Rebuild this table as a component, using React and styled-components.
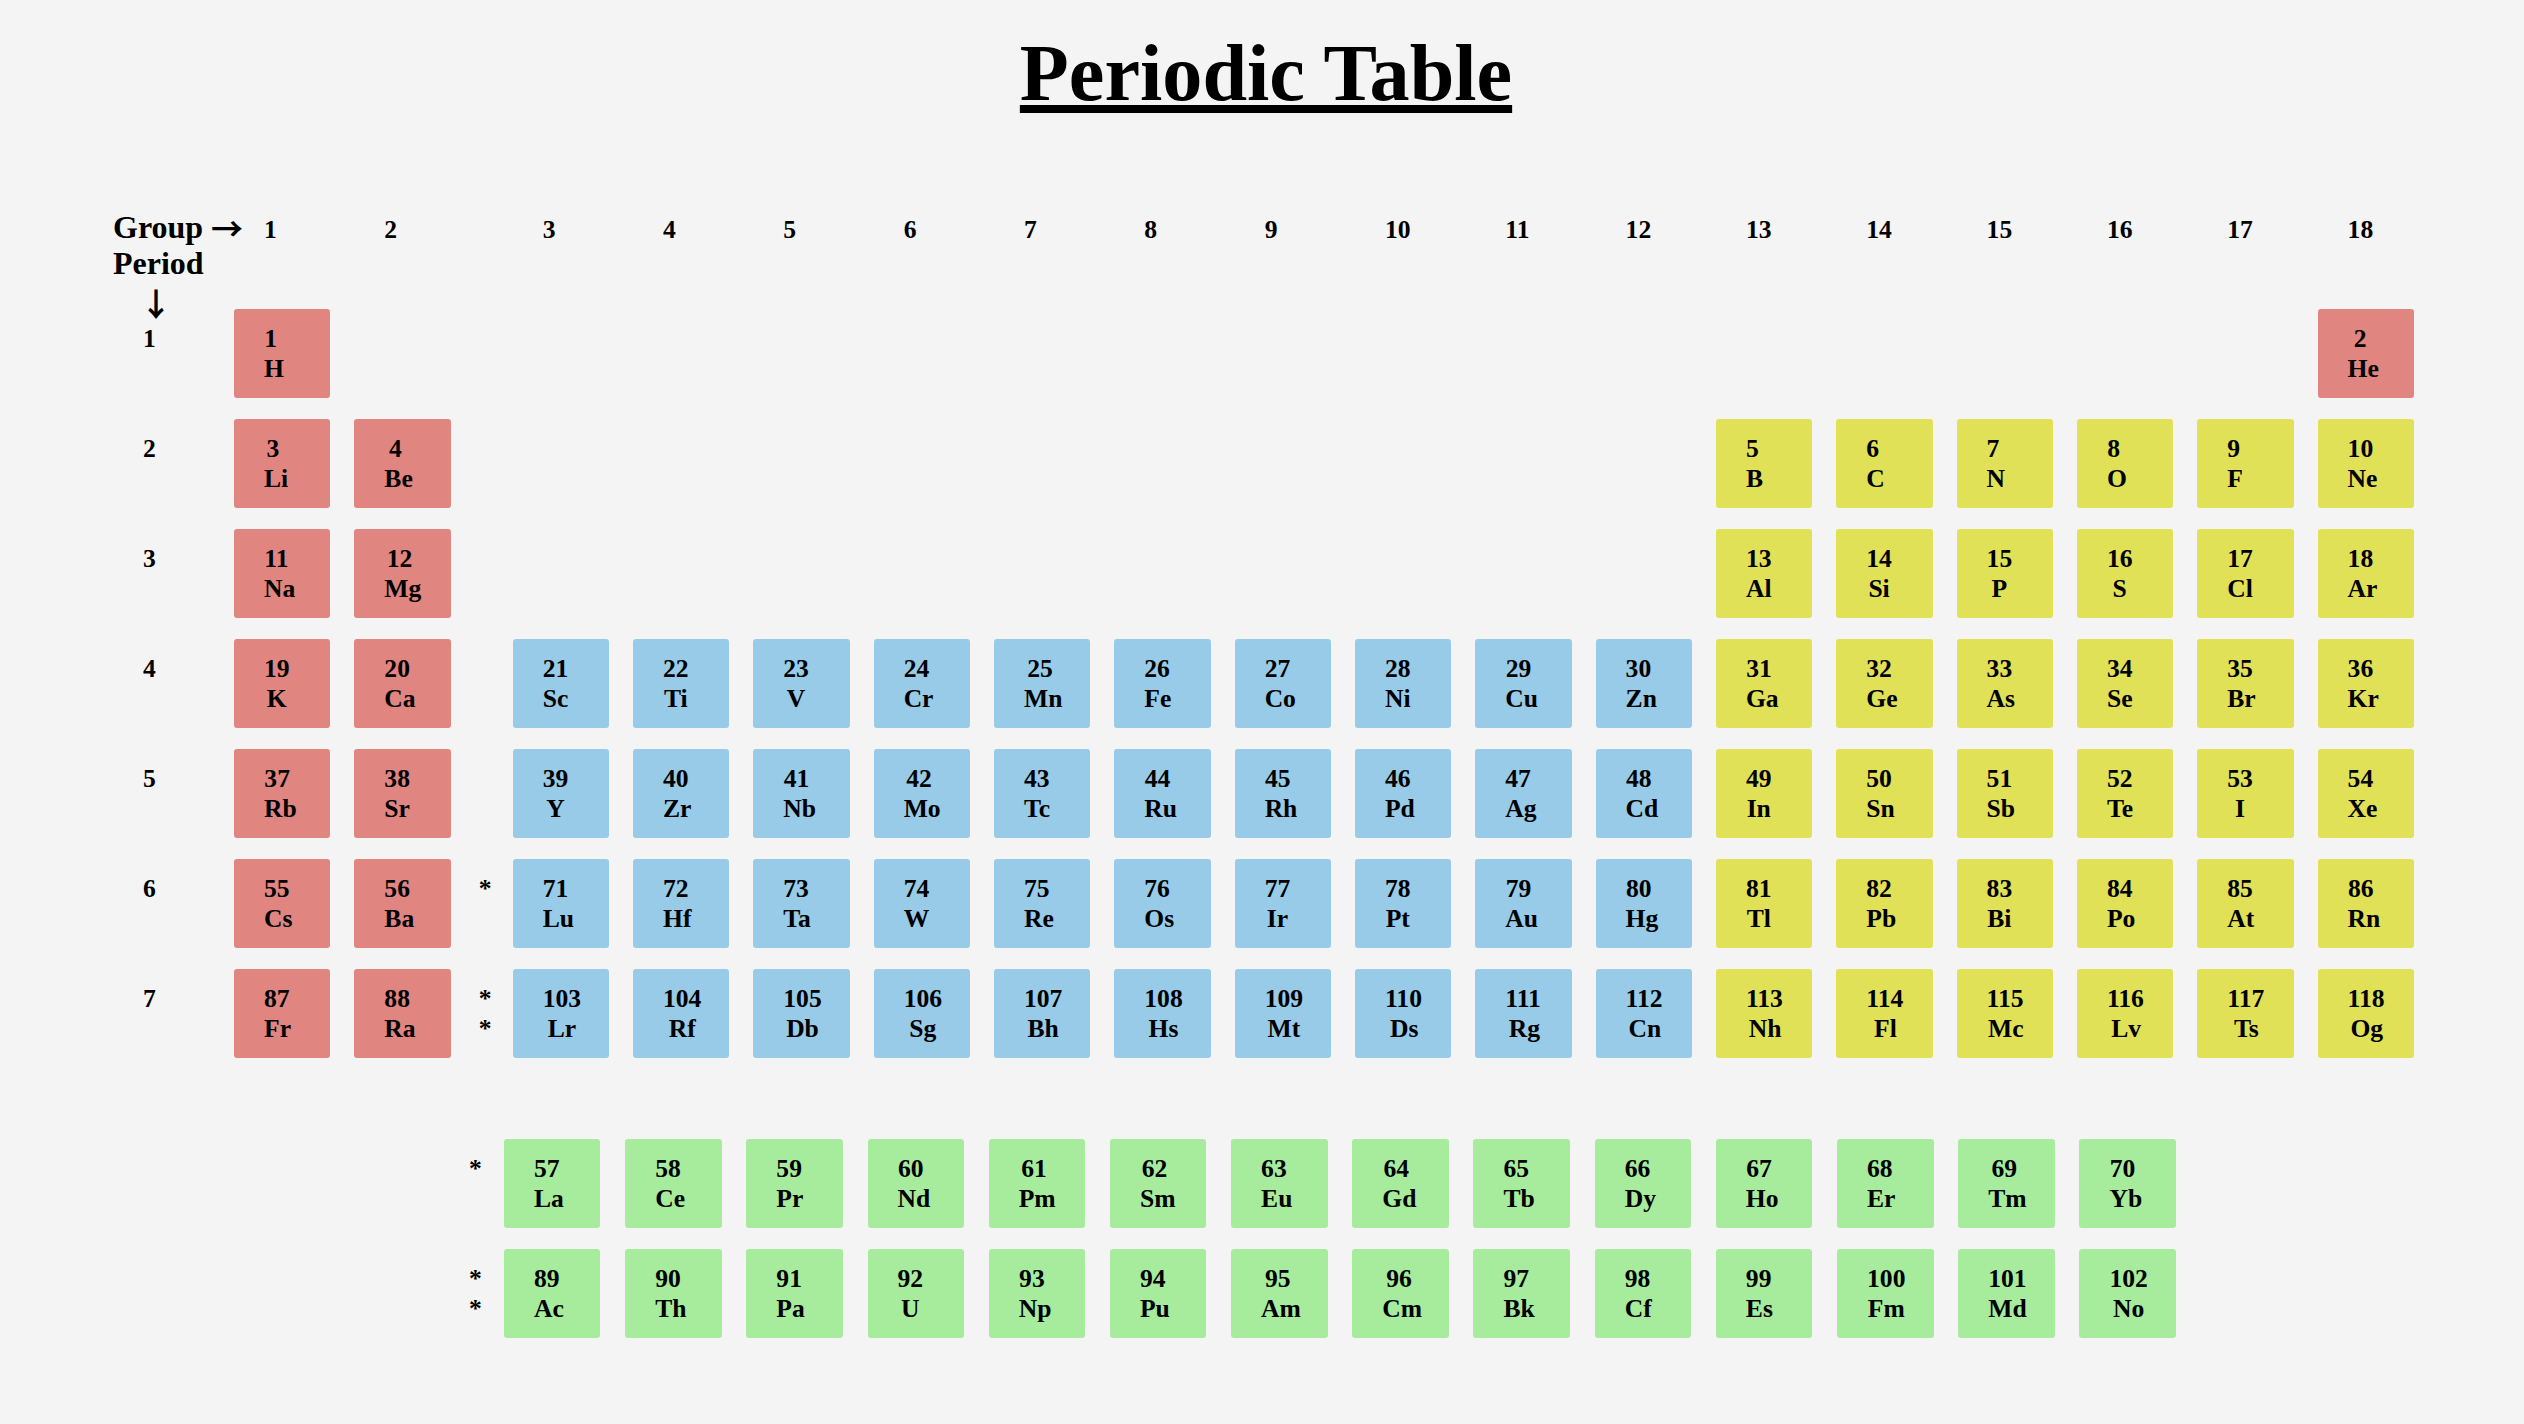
import styled, { createGlobalStyle } from "styled-components";

const SYMBOLS =
  "H He Li Be B C N O F Ne Na Mg Al Si P S Cl Ar K Ca Sc Ti V Cr Mn Fe Co Ni Cu Zn Ga Ge As Se Br Kr Rb Sr Y Zr Nb Mo Tc Ru Rh Pd Ag Cd In Sn Sb Te I Xe Cs Ba La Ce Pr Nd Pm Sm Eu Gd Tb Dy Ho Er Tm Yb Lu Hf Ta W Re Os Ir Pt Au Hg Tl Pb Bi Po At Rn Fr Ra Ac Th Pa U Np Pu Am Cm Bk Cf Es Fm Md No Lr Rf Db Sg Bh Hs Mt Ds Rg Cn Nh Fl Mc Lv Ts Og".split(
    " "
  );

const COLORS = {
  s: "#e18580",
  d: "#97cbe8",
  p: "#e1e157",
  f: "#a7ec9c",
};

function range(a, b) {
  let out = [];
  for (let i = a; i <= b; i++) out.push(i);
  return out;
}

const gap = (n) => Array(n).fill(null);

// each period: atomic numbers for groups 1..18, null where empty
const PERIODS = [
  [1, ...gap(16), 2],
  [3, 4, ...gap(10), ...range(5, 10)],
  [11, 12, ...gap(10), ...range(13, 18)],
  range(19, 36),
  range(37, 54),
  [55, 56, ...range(71, 86)],
  [87, 88, ...range(103, 118)],
];

const STARS = { 6: "*", 7: "*\n*" };

function kindOf(num, group) {
  if (group <= 2 || num === 2) return "s";
  if (group <= 12) return "d";
  return "p";
}

const GlobalStyle = createGlobalStyle`
  html, body {
    background: #f4f4f4;
  }
  body {
    margin: 0;
    font-family: "Liberation Serif", "Times New Roman", serif;
    font-weight: bold;
    color: #000;
  }
`;

const Page = styled.div`
  padding: 28px 0 60px;
`;

const Title = styled.h1`
  margin: 0 0 89.7px;
  padding-left: 8px;
  font-size: 80.2px;
  line-height: normal;
  text-align: center;
  text-decoration: underline;
`;

const MainGrid = styled.div`
  display: grid;
  grid-template-columns: 97px 96.33px 96.33px 14px repeat(16, 96.33px);
  grid-template-rows: 79.4px repeat(7, 89px);
  column-gap: 24px;
  row-gap: 21px;
  margin-left: 113px;
  font-size: 25.6px;
`;

const HeaderLabel = styled.div`
  align-self: baseline;
  font-size: 32px;
  line-height: 36.8px;
  white-space: nowrap;
`;

const Arrow = styled.span`
  font-family: "Noto Sans CJK JP", "DejaVu Sans", sans-serif;
  line-height: 0;
  vertical-align: ${(p) => p.$drop}px;
`;

const DownArrow = styled.div`
  padding-left: 27px;
`;

const GroupNum = styled.div`
  align-self: baseline;
  padding-left: 30px;
`;

const PeriodNum = styled.div`
  padding: 15px 0 0 30px;
`;

const Star = styled.div`
  padding: 15px 0 0 ${(p) => p.$pad}px;
  white-space: pre-line;
`;

const Cell = styled.div`
  display: flex;
  align-items: center;
  height: 89px;
  padding-left: 30px;
  box-sizing: border-box;
  border-radius: 3px;
  background: ${(p) => COLORS[p.$kind]};
`;

const CellText = styled.div`
  min-width: ${(p) => p.$digits * 0.5}em;
  text-align: center;
`;

// the number is centred together with a trailing space that does not widen the cell
const NumRow = styled.div`
  display: flex;
  justify-content: safe center;
  width: 0;
  min-width: 100%;
  &::after {
    content: "";
    flex: none;
    width: 0.25em;
  }
`;

const Empty = styled.div``;

const FBlock = styled.div`
  display: grid;
  grid-template-columns: 10.3px repeat(14, 96.5px);
  grid-auto-rows: 89px;
  column-gap: 24.7px;
  row-gap: 21px;
  margin: 81px 0 0 469px;
  font-size: 25.6px;
`;

function Element({ num, kind }) {
  return (
    <Cell $kind={kind}>
      <CellText $digits={String(num).length}>
        <NumRow>
          <span>{num}</span>
        </NumRow>
        <div>{SYMBOLS[num - 1]}</div>
      </CellText>
    </Cell>
  );
}

export default function App() {
  const groups = range(1, 18);
  return (
    <Page>
      <GlobalStyle />
      <Title>Periodic Table</Title>
      <MainGrid>
        <HeaderLabel>
          Group <Arrow $drop={-3}>→</Arrow>
          <br />
          Period
          <DownArrow>
            <Arrow $drop={-5}>↓</Arrow>
          </DownArrow>
        </HeaderLabel>
        {groups.map((g) => [
          g === 3 ? <Empty key="star-head" /> : null,
          <GroupNum key={"g" + g}>{g}</GroupNum>,
        ])}
        {PERIODS.map((row, i) => {
          const period = i + 1;
          return [
            <PeriodNum key={"p" + period}>{period}</PeriodNum>,
            ...row.map((num, j) => {
              const group = j + 1;
              return [
                group === 3 ? (
                  <Star key={"s" + period} $pad={4}>
                    {STARS[period] || ""}
                  </Star>
                ) : null,
                num ? (
                  <Element key={num} num={num} kind={kindOf(num, group)} />
                ) : (
                  <Empty key={"e" + period + "-" + group} />
                ),
              ];
            }),
          ];
        })}
      </MainGrid>
      <FBlock>
        <Star $pad={0}>*</Star>
        {range(57, 70).map((num) => (
          <Element key={num} num={num} kind="f" />
        ))}
        <Star $pad={0}>{"*\n*"}</Star>
        {range(89, 102).map((num) => (
          <Element key={num} num={num} kind="f" />
        ))}
      </FBlock>
    </Page>
  );
}
